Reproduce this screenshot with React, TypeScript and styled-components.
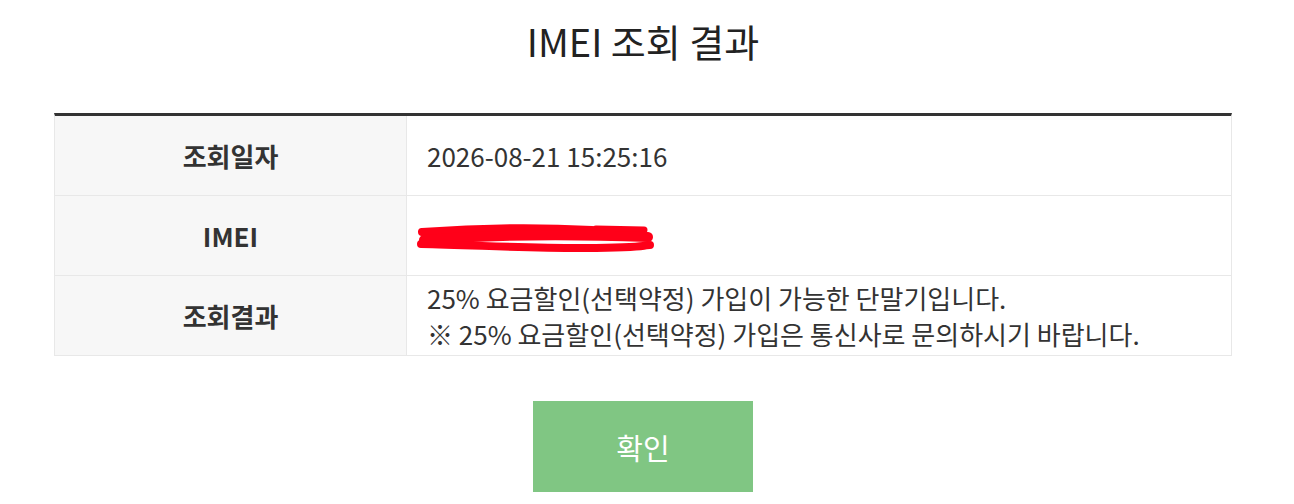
import React from "react";
import styled, { createGlobalStyle } from "styled-components";

const GlobalStyle = createGlobalStyle`
  html, body {
    margin: 0;
    padding: 0;
    background: #ffffff;
    font-family: "Noto Sans CJK KR", "Noto Sans", sans-serif;
    color: #333333;
  }
`;

const rows = [
  { label: "조회일자", value: ["2026-08-21 15:25:16"] },
  { label: "IMEI", value: null },
  {
    label: "조회결과",
    value: [
      "25% 요금할인(선택약정) 가입이 가능한 단말기입니다.",
      "※ 25% 요금할인(선택약정) 가입은 통신사로 문의하시기 바랍니다.",
    ],
  },
];

function Scribble() {
  /* the IMEI number is hidden under a marker stroke */
  return (
    <ScribbleSvg width="240" height="34" viewBox="0 0 240 34">
      <g stroke="#ff0019" strokeLinecap="round" fill="none">
        <path d="M6 12 C 60 8, 120 7, 176 10" strokeWidth="8" />
        <path d="M180 9 L 228 10" strokeWidth="7" />
        <path d="M8 20 C 70 15, 150 14, 232 17" strokeWidth="10" />
        <path d="M5 24 C 60 25, 120 29, 180 28 S 225 25, 234 25" strokeWidth="8" />
      </g>
    </ScribbleSvg>
  );
}

export default function App() {
  return (
    <>
      <GlobalStyle />
      <Page>
        <Title>IMEI 조회 결과</Title>
        <Table>
          {rows.map((row) => (
            <Row key={row.label}>
              <Label>{row.label}</Label>
              <Value>
                {row.value ? (
                  row.value.map((line) => <Line key={line}>{line}</Line>)
                ) : (
                  <Scribble />
                )}
              </Value>
            </Row>
          ))}
        </Table>
        <Actions>
          <ConfirmButton type="button">확인</ConfirmButton>
        </Actions>
      </Page>
    </>
  );
}

const Page = styled.div`
  width: 1178px;
  margin-left: 54px;
  display: flex;
  flex-direction: column;
`;

const Title = styled.h1`
  margin: 0;
  height: 113px;
  padding-top: 14px;
  box-sizing: border-box;
  text-align: center;
  font-size: 38px;
  font-weight: 400;
  line-height: 54px;
  color: #222222;
`;

const Table = styled.div`
  border-top: 3px solid #333333;
  border-left: 1px solid #e8e8e8;
  border-right: 1px solid #e8e8e8;
`;

const Row = styled.div`
  display: grid;
  grid-template-columns: 352px 1fr;
  border-bottom: 1px solid #e8e8e8;
  height: 80px;
  box-sizing: border-box;
`;

const Label = styled.div`
  display: flex;
  align-items: center;
  justify-content: center;
  background: #f7f7f7;
  border-right: 1px solid #e8e8e8;
  font-size: 26px;
  font-weight: 700;
  color: #333333;
`;

const Value = styled.div`
  display: flex;
  flex-direction: column;
  justify-content: center;
  padding: 0 20px;
  font-size: 26px;
  line-height: 36px;
  color: #333333;
`;

const Line = styled.div`
  white-space: nowrap;
`;

const ScribbleSvg = styled.svg`
  display: block;
  margin-left: -11px;
  margin-top: 2px;
`;

const Actions = styled.div`
  display: flex;
  justify-content: center;
  padding-top: 45px;
`;

const ConfirmButton = styled.button`
  width: 220px;
  height: 91px;
  border: none;
  background: #80c683;
  color: #ffffff;
  font-family: "Noto Sans CJK KR", "Noto Sans", sans-serif;
  font-size: 29px;
  font-weight: 400;
  cursor: pointer;
`;
